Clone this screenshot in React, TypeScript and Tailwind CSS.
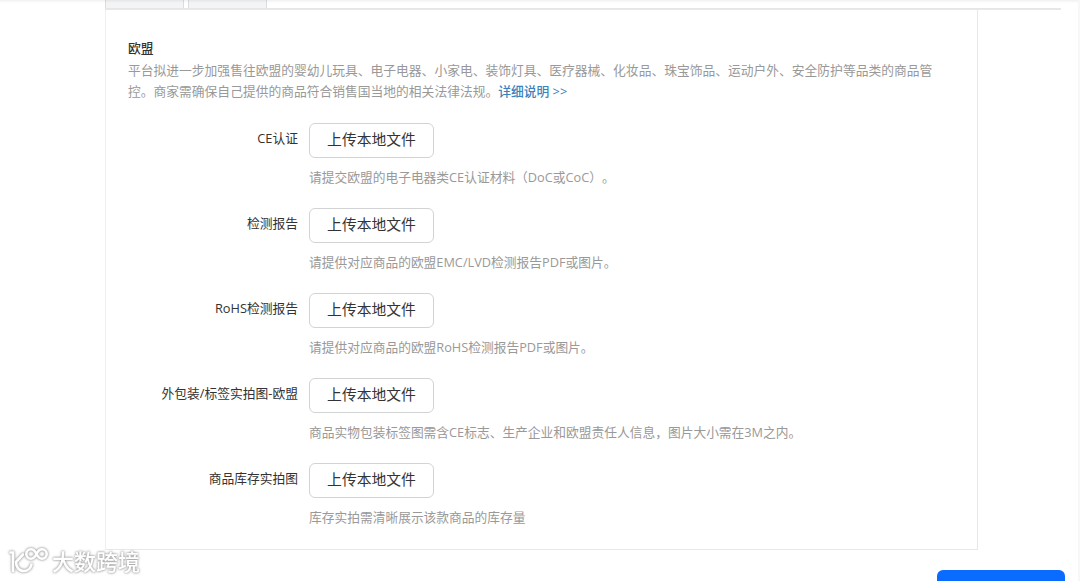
const uploads = [
  { label: 'CE认证', hint: '请提交欧盟的电子电器类CE认证材料（DoC或CoC）。' },
  { label: '检测报告', hint: '请提供对应商品的欧盟EMC/LVD检测报告PDF或图片。' },
  { label: 'RoHS检测报告', hint: '请提供对应商品的欧盟RoHS检测报告PDF或图片。' },
  { label: '外包装/标签实拍图-欧盟', hint: '商品实物包装标签图需含CE标志、生产企业和欧盟责任人信息，图片大小需在3M之内。' },
  { label: '商品库存实拍图', hint: '库存实拍需清晰展示该款商品的库存量' },
]

function UploadRow({ label, hint }: { label: string; hint: string }) {
  return (
    <div className="flex h-[85px] gap-[11px]">
      <div className="w-[170px] shrink-0 pt-[5px] text-right leading-5 whitespace-nowrap text-[#333]">{label}</div>
      <div>
        <button className="block h-[35px] w-[125px] rounded-md border border-[#d2d3d5] bg-white pb-[3px] text-[14.8px] text-[#333]">
          上传本地文件
        </button>
        <p className="mt-[9px] text-[12.74px] leading-5 whitespace-nowrap text-[#999] [text-spacing-trim:space-all]">
          {hint}
        </p>
      </div>
    </div>
  )
}

function Watermark() {
  return (
    <div className="absolute top-[544px] left-[8px] flex items-center text-white [filter:drop-shadow(0_0_1px_#999)_drop-shadow(0_0_1px_#ccc)]">
      <svg
        width="42"
        height="34"
        viewBox="0 0 42 34"
        fill="none"
        stroke="currentColor"
        strokeWidth="2.6"
        strokeLinecap="round"
        strokeLinejoin="round"
      >
        <path d="M2.5 8.5H5V27" />
        <path d="M15 10.5L8 18c0 5 3 9 7.500 9 4 0 7-2.500 8-6.500" />
        <path d="M28.500 10c-1.500-3-3-4.700-5.500-4.700a4.700 4.700 0 0 0 0 9.400c2.500 0 4-1.700 5.500-4.700s3-4.700 5.500-4.700a4.700 4.700 0 0 1 0 9.400c-2.500 0-4-1.700-5.500-4.700z" />
      </svg>
      <span className="ml-[2px] text-[22px] leading-[34px] font-medium">大数跨境</span>
    </div>
  )
}

export default function App() {
  return (
    <div className="relative h-[581px] w-[1080px] overflow-hidden bg-white font-['Open_Sans','Noto_Sans_CJK_SC',sans-serif] text-[12.77px]">
      {/* Tabs */}
      <div className="flex h-[8px] gap-[4px] pl-[105px]">
        <div className="w-[79px] border-x border-[#dcdddf] bg-[#f3f4f6]" />
        <div className="w-[79px] border-x border-[#dcdddf] bg-[#f3f4f6]" />
      </div>
      <div className="ml-[105px] h-[2px] w-[956px] border-t border-[#e6e6e6] bg-[#e8e8e8]" />

      {/* Compliance panel */}
      <div className="ml-[105px] h-[540px] w-[873px] border border-t-0 border-[#e8e8e8] border-l-[#f0f0f0] pt-[28px] pl-[22px]">
        <h3 className="mb-px text-[12.77px] leading-[21px] font-medium text-[#333]">欧盟</h3>
        <p className="leading-[21.3px] whitespace-nowrap text-[#999]">
          平台拟进一步加强售往欧盟的婴幼儿玩具、电子电器、小家电、装饰灯具、医疗器械、化妆品、珠宝饰品、运动户外、安全防护等品类的商品管
          <br />
          控。商家需确保自己提供的商品符合销售国当地的相关法律法规。
          <a className="font-medium text-[#3a82bd]">详细说明 &gt;&gt;</a>
        </p>
        <div className="mt-[20px]">
          {uploads.map((item) => (
            <UploadRow key={item.label} {...item} />
          ))}
        </div>
      </div>

      {/* Page edges */}
      <div className="absolute inset-x-0 top-0 h-[3px] bg-gradient-to-b from-black/6 to-transparent" />
      <div className="absolute top-0 right-0 h-full w-[2px] bg-[#f7f7f7]" />

      <button className="absolute top-[570px] left-[937px] h-[40px] w-[128px] rounded-md bg-[#0a6cff]" />
      <Watermark />
    </div>
  )
}
